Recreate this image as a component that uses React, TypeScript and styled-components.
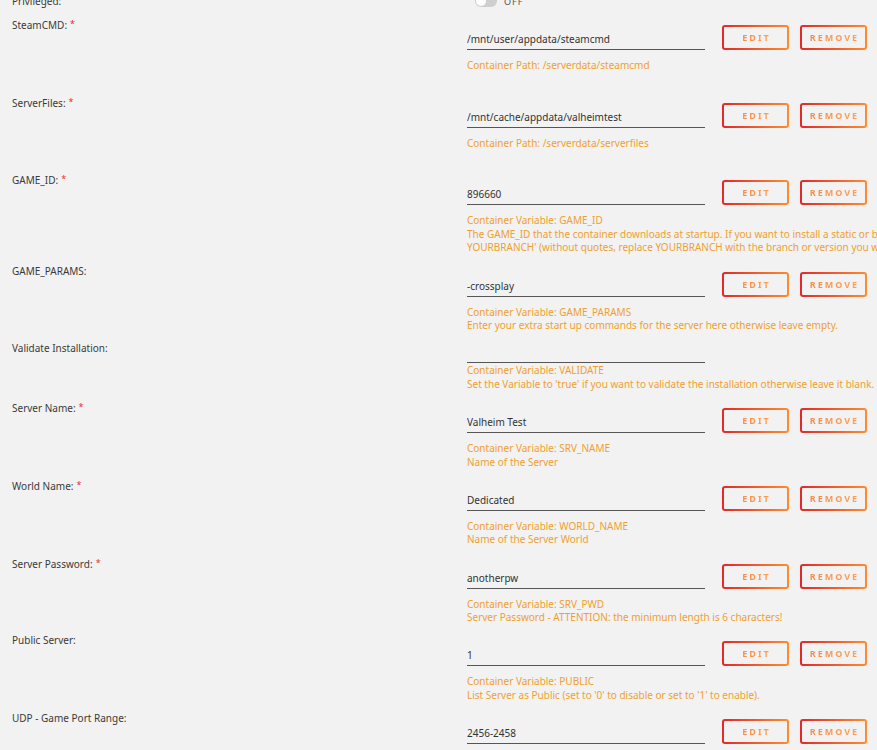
import React, {FC} from "react";
import styled, {createGlobalStyle} from "styled-components";

const GlobalStyle = createGlobalStyle`
  html, body {
    margin: 0;
    padding: 0;
    background: #f2f2f2;
    overflow: hidden;
  }
  body {
    font-family: "Noto Sans", "Open Sans", sans-serif;
    font-size: 10px;
    color: #3a3a3a;
  }
`

const Page = styled.div`
  margin-top: -6px;
  padding-left: 12px;
  width: 1400px;
`

const Row = styled.div`
  display: grid;
  grid-template-columns: 455px 1fr;
  padding-bottom: 8.75px;
`

const Label = styled.div`
  line-height: 14px;
  white-space: nowrap;
`

const Required = styled.span`
  color: #ef2b2b;
  font-size: 9px;
  vertical-align: 2px;
  margin-left: 3px;
`

const FieldLine = styled.div<{ $withButtons: boolean }>`
  display: flex;
  align-items: flex-start;
  padding-top: ${p => p.$withButtons ? "8px" : "0"};
  padding-bottom: ${p => p.$withButtons ? "9px" : "1px"};
`

const TextInput = styled.input<{ $short?: boolean }>`
  box-sizing: border-box;
  width: 238px;
  height: ${p => p.$short ? "22px" : "25px"};
  margin: 0;
  padding: 4px 0 0;
  border: none;
  border-bottom: 1px solid #555;
  background: transparent;
  font-family: inherit;
  font-size: 10px;
  color: #333;
  outline: none;
`

const Actions = styled.div`
  display: flex;
  gap: 11px;
  margin-left: 17px;
`

const GradientButton = styled.button`
  box-sizing: border-box;
  width: 67px;
  height: 25px;
  padding: 0;
  border: 2px solid transparent;
  border-radius: 3px;
  background: linear-gradient(#f2f2f2, #f2f2f2) padding-box,
  linear-gradient(90deg, #e22828 0, #ff8c2f 100%) border-box;
  font-family: inherit;
  font-size: 9px;
  font-weight: 700;
  letter-spacing: 2px;
  text-transform: uppercase;
  cursor: pointer;

  span {
    background: linear-gradient(90deg, #f58a4c 0, #ffa055 100%);
    -webkit-background-clip: text;
    background-clip: text;
    color: transparent;
    padding-left: 2px;
  }
`

const Help = styled.div`
  color: #f0a030;
  line-height: 13.5px;
  white-space: nowrap;
  min-height: 13.5px;
`

const SwitchLine = styled.div`
  display: flex;
  align-items: center;
  gap: 7px;
  height: 14px;
  padding-left: 8px;
`

const Switch = styled.div`
  position: relative;
  width: 22px;
  height: 12px;
  border-radius: 6px;
  background: #cfcfcf;

  &::after {
    content: "";
    position: absolute;
    left: 1px;
    top: 1px;
    width: 10px;
    height: 10px;
    border-radius: 50%;
    background: #fff;
  }
`

const SwitchText = styled.span`
  font-size: 9px;
  letter-spacing: 1px;
  color: #555;
`

type Setting = {
    label: string
    required?: boolean
    value: string
    buttons?: boolean
    help: string[]
}

const settings: Setting[] = [
    {label: "SteamCMD:", required: true, value: "/mnt/user/appdata/steamcmd", buttons: true,
        help: ["Container Path: /serverdata/steamcmd", ""]},
    {label: "ServerFiles:", required: true, value: "/mnt/cache/appdata/valheimtest", buttons: true,
        help: ["Container Path: /serverdata/serverfiles", ""]},
    {label: "GAME_ID:", required: true, value: "896660", buttons: true,
        help: [
            "Container Variable: GAME_ID",
            "The GAME_ID that the container downloads at startup. If you want to install a static or beta version of the game change the value to: '896660 -beta",
            "YOURBRANCH' (without quotes, replace YOURBRANCH with the branch or version you want to install).",
        ]},
    {label: "GAME_PARAMS:", value: "-crossplay", buttons: true,
        help: ["Container Variable: GAME_PARAMS", "Enter your extra start up commands for the server here otherwise leave empty."]},
    {label: "Validate Installation:", value: "",
        help: ["Container Variable: VALIDATE", "Set the Variable to 'true' if you want to validate the installation otherwise leave it blank."]},
    {label: "Server Name:", required: true, value: "Valheim Test", buttons: true,
        help: ["Container Variable: SRV_NAME", "Name of the Server"]},
    {label: "World Name:", required: true, value: "Dedicated", buttons: true,
        help: ["Container Variable: WORLD_NAME", "Name of the Server World"]},
    {label: "Server Password:", required: true, value: "anotherpw", buttons: true,
        help: ["Container Variable: SRV_PWD", "Server Password - ATTENTION: the minimum length is 6 characters!"]},
    {label: "Public Server:", value: "1", buttons: true,
        help: ["Container Variable: PUBLIC", "List Server as Public (set to '0' to disable or set to '1' to enable)."]},
    {label: "UDP - Game Port Range:", value: "2456-2458", buttons: true,
        help: ["Container Port: 2456-2458", "UDP Game Port Range"]},
]

const SettingRow: FC<{ setting: Setting }> = ({setting}) => {
    const withButtons = !!setting.buttons;
    return (
        <Row>
            <Label>
                {setting.label}
                {setting.required && <Required>*</Required>}
            </Label>
            <div>
                <FieldLine $withButtons={withButtons}>
                    <TextInput $short={!withButtons} defaultValue={setting.value}/>
                    {withButtons &&
                        <Actions>
                            <GradientButton type="button"><span>Edit</span></GradientButton>
                            <GradientButton type="button"><span>Remove</span></GradientButton>
                        </Actions>
                    }
                </FieldLine>
                {setting.help.map((line, i) => <Help key={i}>{line}</Help>)}
            </div>
        </Row>
    )
}

const App: FC = () => {
    return (
        <React.Fragment>
            <GlobalStyle/>
            <Page>
                <Row>
                    <Label>Privileged:</Label>
                    <SwitchLine>
                        <Switch/>
                        <SwitchText>OFF</SwitchText>
                    </SwitchLine>
                </Row>
                {settings.map(s => <SettingRow key={s.label} setting={s}/>)}
            </Page>
        </React.Fragment>
    )
}

export default App;
